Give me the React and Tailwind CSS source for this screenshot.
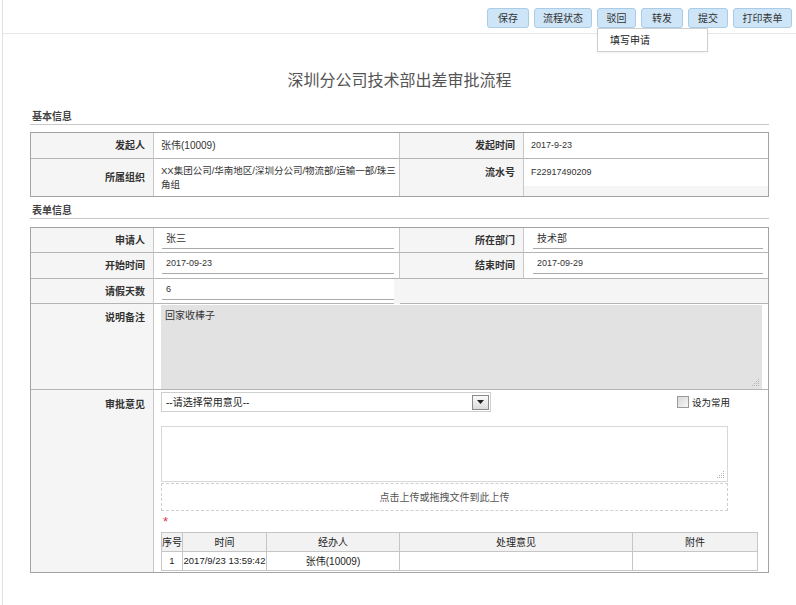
import React from "react";

const F = "font-['Liberation_Sans','Noto_Sans_CJK_SC',sans-serif]";

function Btn({ w, children }) {
  return (
    <div
      className={`h-[20px] ${w} flex items-center justify-center rounded-[3px] border border-[#a9cde8] bg-[#cde5f7] text-[10px] text-[#333]`}
    >
      {children}
    </div>
  );
}

function Grip() {
  return (
    <svg className="absolute right-[2px] bottom-[2px]" width="9" height="9" viewBox="0 0 9 9">
      <g fill="#b5b5b5">
        <rect x="7" y="1" width="1" height="1" />
        <rect x="5" y="3" width="1" height="1" />
        <rect x="7" y="3" width="1" height="1" />
        <rect x="3" y="5" width="1" height="1" />
        <rect x="5" y="5" width="1" height="1" />
        <rect x="7" y="5" width="1" height="1" />
        <rect x="1" y="7" width="1" height="1" />
        <rect x="3" y="7" width="1" height="1" />
        <rect x="5" y="7" width="1" height="1" />
        <rect x="7" y="7" width="1" height="1" />
      </g>
    </svg>
  );
}

function Label({ children, className = "" }) {
  return (
    <div
      className={`bg-[#f5f5f5] border-r border-[#c8c8c8] pr-[8px] text-right font-bold text-[10px] text-[#333] ${className}`}
    >
      {children}
    </div>
  );
}

function Input({ w, children }) {
  return (
    <div className={`${w} h-[20px] border-b border-[#aaa] bg-white pl-[4px] flex items-center text-[10px] text-[#333]`}>
      {children}
    </div>
  );
}

export default function App() {
  return (
    <div className={`w-[796px] h-[605px] bg-white overflow-hidden relative ${F}`}>
      <div className="ml-[2px] border-l border-[#e2e2e2] h-full">
        {/* toolbar */}
        <div className="h-[34px] border-b border-[#e6e6e6] flex justify-end items-start pt-[8px] pr-[4px] gap-[5px]">
          <Btn w="w-[42px]">保存</Btn>
          <Btn w="w-[58px]">流程状态</Btn>
          <Btn w="w-[39px]">驳回</Btn>
          <Btn w="w-[42px]">转发</Btn>
          <Btn w="w-[40px]">提交</Btn>
          <Btn w="w-[59px]">打印表单</Btn>
        </div>

        {/* title */}
        <div className="mt-[36px] h-[22px] flex items-center justify-center text-[16px] text-[#555]">
          深圳分公司技术部出差审批流程
        </div>

        <div className="ml-[27px] w-[739px]">
          {/* 基本信息 */}
          <div className="mt-[18px] h-[15px] border-b border-[#c8c8c8] pl-[2px] text-[10px] font-bold text-[#444] leading-[13px]">
            基本信息
          </div>
          <div className="mt-[7px] border border-[#a3a3a3] bg-[#f5f5f5] grid grid-cols-[123px_246px_124px_1fr]">
            <Label className="h-[26px] border-b border-b-[#b5b5b5] flex items-center justify-end">发起人</Label>
            <div className="h-[26px] border-b border-[#b5b5b5] border-r border-r-[#c8c8c8] bg-white pl-[7px] flex items-center text-[10px] text-[#333]">
              张伟(10009)
            </div>
            <Label className="h-[26px] border-b border-b-[#b5b5b5] flex items-center justify-end">发起时间</Label>
            <div className="h-[26px] border-b border-[#b5b5b5] bg-white pl-[7px] flex items-center text-[9px] text-[#333]">
              2017-9-23
            </div>

            <Label className="h-[37px] flex items-center justify-end">所属组织</Label>
            <div className="h-[37px] border-r border-[#c8c8c8] bg-white pl-[7px] flex flex-col justify-center text-[9.5px] leading-[14px] text-[#333] whitespace-nowrap">
              <span>XX集团公司/华南地区/深圳分公司/物流部/运输一部/珠三</span>
              <span>角组</span>
            </div>
            <Label className="h-[37px] pt-[6px]">
              <div className="h-[14px] flex items-center justify-end">流水号</div>
            </Label>
            <div className="h-[37px]">
              <div className="h-[27px] bg-white pl-[7px] flex items-center text-[9px] text-[#333]">F22917490209</div>
            </div>
          </div>

          {/* 表单信息 */}
          <div className="mt-[7px] h-[15px] border-b border-[#c8c8c8] pl-[2px] text-[10px] font-bold text-[#444] leading-[13px]">
            表单信息
          </div>
          <div className="mt-[8px] border border-[#a3a3a3] bg-[#f5f5f5] grid grid-cols-[123px_246px_124px_1fr]">
            {/* row 1 */}
            <Label className="h-[25px] border-b border-b-[#b5b5b5] flex items-center justify-end">申请人</Label>
            <div className="h-[25px] border-b border-[#b5b5b5] border-r border-r-[#c8c8c8] bg-white pl-[8px] pt-[1px]">
              <Input w="w-[232px]">张三</Input>
            </div>
            <Label className="h-[25px] border-b border-b-[#b5b5b5] flex items-center justify-end">所在部门</Label>
            <div className="h-[25px] border-b border-[#b5b5b5] bg-white pl-[9px] pt-[1px]">
              <Input w="w-[230px]">技术部</Input>
            </div>

            {/* row 2 */}
            <Label className="h-[26px] border-b border-b-[#b5b5b5] flex items-center justify-end">开始时间</Label>
            <div className="h-[26px] border-b border-[#b5b5b5] border-r border-r-[#c8c8c8] bg-white pl-[8px] pt-[1px]">
              <Input w="w-[232px]"><span className="text-[9px]">2017-09-23</span></Input>
            </div>
            <Label className="h-[26px] border-b border-b-[#b5b5b5] flex items-center justify-end">结束时间</Label>
            <div className="h-[26px] border-b border-[#b5b5b5] bg-white pl-[9px] pt-[1px]">
              <Input w="w-[230px]"><span className="text-[9px]">2017-09-29</span></Input>
            </div>

            {/* row 3 */}
            <Label className="h-[25px] border-b border-b-[#b5b5b5] flex items-center justify-end">请假天数</Label>
            <div className="h-[25px] border-b border-[#b5b5b5] bg-white pl-[8px] pt-[1px] w-[240px]">
              <Input w="w-[232px]"><span className="text-[9px]">6</span></Input>
            </div>
            <div className="col-span-2 h-[25px] border-b border-[#b5b5b5]" />

            {/* row 4 */}
            <Label className="h-[86px] border-b border-b-[#b5b5b5] pt-[6px]">说明备注</Label>
            <div className="col-span-3 h-[86px] border-b border-[#b5b5b5] bg-white pl-[7px] pt-[1px]">
              <div className="relative w-[601px] h-[84px] bg-[#e2e2e2] pl-[4px] pt-[3px] text-[10px] text-[#333]">
                回家收棒子
                <Grip />
              </div>
            </div>

            {/* row 5 */}
            <Label className="h-[182px] pt-[7px]">审批意见</Label>
            <div className="col-span-3 h-[182px] bg-white pl-[7px] pt-[2px] flex flex-col">
              <div className="flex items-start">
                <div className="w-[330px] h-[20px] border border-[#cfcfcf] flex items-center justify-between pl-[4px] pr-[1px] text-[10px] text-[#222]">
                  <span>--请选择常用意见--</span>
                  <div className="w-[17px] h-[15px] border border-[#8a8a8a] bg-gradient-to-b from-[#fafafa] to-[#dcdcdc] flex items-center justify-center">
                    <svg width="7" height="4" viewBox="0 0 7 4">
                      <path d="M0 0 H7 L3.5 4 Z" fill="#222" />
                    </svg>
                  </div>
                </div>
                <div className="ml-[186px] mt-[1px] flex items-center">
                  <div className="w-[12px] h-[12px] border border-[#9a9a9a] bg-gradient-to-br from-[#d8d8d8] to-[#f6f6f6]" />
                  <span className="ml-[3px] mt-[3px] text-[9.5px] text-[#222]">设为常用</span>
                </div>
              </div>
              <div className="relative mt-[14px] w-[567px] h-[56px] border border-[#d8d8d8] bg-white">
                <Grip />
              </div>
              <div className="mt-[1px] w-[567px] h-[28px] border border-dashed border-[#cfcfcf] flex items-center justify-center text-[10px] text-[#555]">
                点击上传或拖拽文件到此上传
              </div>
              <div className="h-[21px] pt-[4px] pl-[2px] text-[13px] leading-[14px] text-[#e0334a]">*</div>
              <div className="w-[597px] border border-[#c6c6c6] grid grid-cols-[21px_84px_133px_233px_1fr] text-[10px] text-[#222]">
                <div className="h-[19px] border-b border-r border-[#c6c6c6] bg-[#f2f2f2] flex items-center justify-center">序号</div>
                <div className="h-[19px] border-b border-r border-[#c6c6c6] bg-[#f2f2f2] flex items-center justify-center">时间</div>
                <div className="h-[19px] border-b border-r border-[#c6c6c6] bg-[#f2f2f2] flex items-center justify-center">经办人</div>
                <div className="h-[19px] border-b border-r border-[#c6c6c6] bg-[#f2f2f2] flex items-center justify-center">处理意见</div>
                <div className="h-[19px] border-b border-[#c6c6c6] bg-[#f2f2f2] flex items-center justify-center">附件</div>
                <div className="h-[18px] border-r border-[#c6c6c6] flex items-center justify-center text-[9.5px]">1</div>
                <div className="h-[18px] border-r border-[#c6c6c6] flex items-center justify-center text-[9.5px] whitespace-nowrap">2017/9/23 13:59:42</div>
                <div className="h-[18px] border-r border-[#c6c6c6] flex items-center justify-center">张伟(10009)</div>
                <div className="h-[18px] border-r border-[#c6c6c6]" />
                <div className="h-[18px]" />
              </div>
            </div>
          </div>
        </div>
      </div>

      {/* dropdown */}
      <div className="absolute left-[597px] top-[28px] w-[111px] h-[24px] border border-[#cfcfcf] bg-white pl-[12px] flex items-center text-[10px] text-[#222] shadow-[0_1px_2px_rgba(0,0,0,0.06)]">
        填写申请
      </div>
    </div>
  );
}
